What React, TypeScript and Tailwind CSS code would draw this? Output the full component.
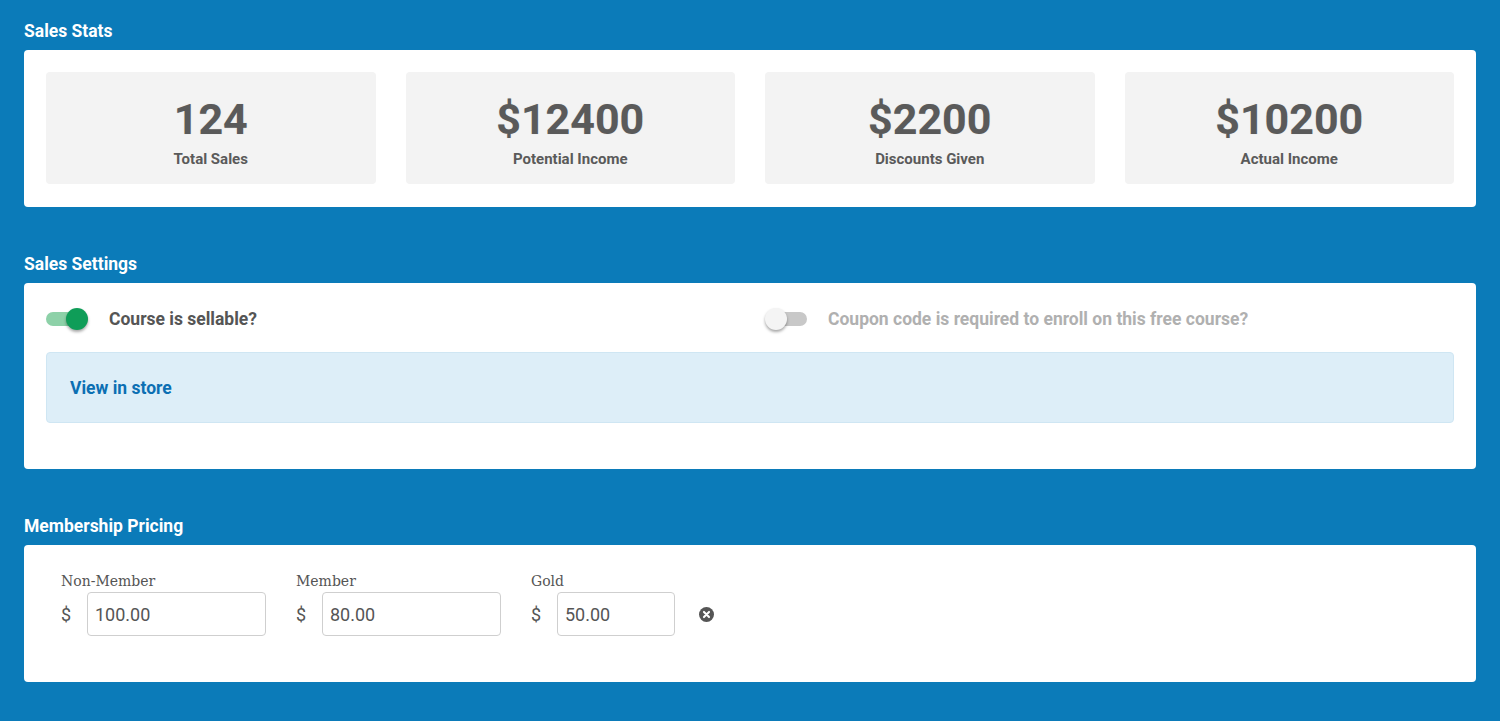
import { useState } from 'react';

const stats = [
  { value: '124', label: 'Total Sales' },
  { value: '$12400', label: 'Potential Income' },
  { value: '$2200', label: 'Discounts Given' },
  { value: '$10200', label: 'Actual Income' },
];

const prices = [
  { label: 'Non-Member', value: '100.00', width: 'w-[179px]' },
  { label: 'Member', value: '80.00', width: 'w-[179px]' },
  { label: 'Gold', value: '50.00', width: 'w-[118px]' },
];

function Toggle({ on, onChange }: { on: boolean; onChange: () => void }) {
  return (
    <button
      type="button"
      onClick={onChange}
      className={`relative h-[14px] w-[38px] shrink-0 rounded-full ${on ? 'bg-[#8dd1a8]' : 'bg-[#c8c8c8]'}`}
    >
      <span
        className={`absolute top-1/2 h-[22px] w-[22px] -translate-y-1/2 rounded-full shadow-[0_2px_3px_rgba(0,0,0,0.35)] ${
          on ? 'right-[-4px] bg-[#0f9d58]' : 'left-[-4px] bg-[#f4f4f4]'
        }`}
      />
    </button>
  );
}

function SectionTitle({ children }: { children: string }) {
  return <h2 className="mb-2 text-[17.5px] leading-[22px] font-bold text-white">{children}</h2>;
}

export default function App() {
  const [sellable, setSellable] = useState(true);
  const [coupon, setCoupon] = useState(false);

  return (
    <div className="min-h-[721px] bg-[#0b7bb9] px-6 pt-[20px] pb-10 font-['Roboto','Liberation_Sans',sans-serif]">
      {/* 販売統計 */}
      <SectionTitle>Sales Stats</SectionTitle>
      <div className="grid grid-cols-4 gap-[30px] rounded-[4px] bg-white px-[22px] pt-[22px] pb-[23px]">
        {stats.map((s) => (
          <div key={s.label} className="flex h-[112px] flex-col items-center rounded-[4px] bg-[#f3f3f3] pt-[23px]">
            <div className="text-[43px] leading-[48px] font-bold text-[#5a5a5a] [text-shadow:0_0_1px_#ccc]">
              {s.value}
            </div>
            <div className="mt-[5px] text-[15px] font-bold text-[#5a5a5a]">{s.label}</div>
          </div>
        ))}
      </div>

      {/* 販売設定 */}
      <div className="mt-[46px]">
        <SectionTitle>Sales Settings</SectionTitle>
        <div className="rounded-[4px] bg-white px-[22px] pt-[22px] pb-[46px]">
          <div className="grid h-[28px] grid-cols-2 items-center gap-[30px]">
            <div className="flex items-center">
              <Toggle on={sellable} onChange={() => setSellable(!sellable)} />
              <span className="ml-[25px] text-[17.5px] font-bold text-[#555]">Course is sellable?</span>
            </div>
            <div className="flex items-center pl-[4px]">
              <Toggle on={coupon} onChange={() => setCoupon(!coupon)} />
              <span className="ml-[21px] text-[17.5px] font-bold text-[#b0b0b0]">
                Coupon code is required to enroll on this free course?
              </span>
            </div>
          </div>
          <div className="mt-[19px] flex h-[71px] items-center rounded-[4px] border border-[#cfe6f3] bg-[#ddeef8] px-[23px] pt-[2px]">
            <a href="#" className="text-[17.5px] font-bold text-[#0b6fb3]">
              View in store
            </a>
          </div>
        </div>
      </div>

      {/* 会員価格 */}
      <div className="mt-[46px]">
        <SectionTitle>Membership Pricing</SectionTitle>
        <div className="rounded-[4px] bg-white px-[37px] pt-[27px] pb-[46px]">
          <div className="flex items-end gap-[30px]">
            {prices.map((p) => (
              <div key={p.label}>
                <div className="mb-[2px] font-['DejaVu_Serif','Liberation_Serif',serif] text-[14px] leading-[18px] text-[#555]">
                  {p.label}
                </div>
                <div className="flex items-center">
                  <span className="w-[26px] text-[18px] text-[#555]">$</span>
                  <input
                    type="text"
                    defaultValue={p.value}
                    className={`${p.width} h-[44px] rounded-[4px] border border-[#cfcfcf] px-[7px] text-[18px] text-[#555] outline-none`}
                  />
                </div>
              </div>
            ))}
            <button type="button" className="mb-[14px] ml-[-7px] flex h-[16px] w-[16px] items-center justify-center">
              <svg viewBox="0 0 16 16" className="h-[15px] w-[15px]">
                <circle cx="8" cy="8" r="8" fill="#555" />
                <path d="M5.3 5.3l5.4 5.4M10.7 5.3l-5.4 5.4" stroke="#fff" strokeWidth="2.2" strokeLinecap="round" />
              </svg>
            </button>
          </div>
        </div>
      </div>
    </div>
  );
}
